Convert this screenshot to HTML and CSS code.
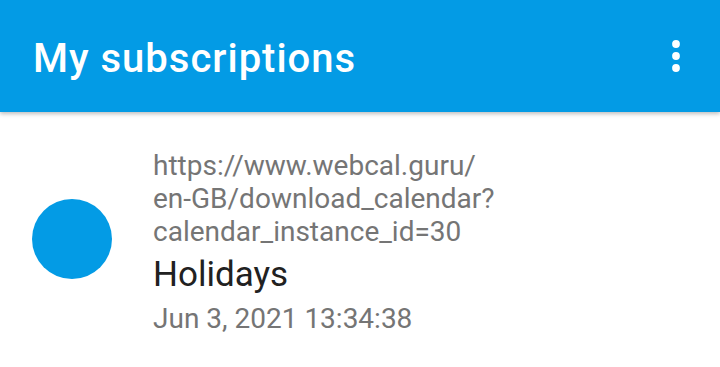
FILE: index.html
```html
<!DOCTYPE html>
<html>
<head>
<meta charset="utf-8">
<link rel="stylesheet" href="styles.css">
</head>
<body>
<header class="toolbar">
  <h1 class="title">My subscriptions</h1>
  <button class="menu" aria-label="More options">
    <svg width="10" height="34" viewBox="0 0 10 34"><circle cx="5" cy="5" r="3.9" fill="#fff"/><circle cx="5" cy="17" r="3.9" fill="#fff"/><circle cx="5" cy="29" r="3.9" fill="#fff"/></svg>
  </button>
</header>
<main class="list">
  <div class="item">
    <div class="avatar"></div>
    <div class="info">
      <div class="url">https://www.webcal.guru/<br>en-GB/download_calendar?<br>calendar_instance_id=30</div>
      <div class="name">Holidays</div>
      <div class="date">Jun 3, 2021 13:34:38</div>
    </div>
  </div>
</main>
</body>
</html>
```
FILE: styles.css
```css
html, body { margin: 0; padding: 0; background: #fff; }
body { width: 720px; height: 367px; overflow: hidden; font-family: Roboto, "Noto Sans", sans-serif; }
.toolbar {
  height: 112px;
  background: #039be5;
  display: flex;
  align-items: center;
  justify-content: space-between;
  padding: 0 0 0 33px;
  box-shadow: 0 2px 4px rgba(0,0,0,0.25);
  position: relative;
  z-index: 1;
}
.title { margin: 5px 0 0; color: #fff; font-size: 40px; font-weight: 500; letter-spacing: 1px; }
.menu { background: none; border: 0; padding: 0; width: 88px; height: 88px; display: flex; align-items: center; justify-content: center; }
.list { padding-top: 37px; }
.item { display: flex; align-items: center; }
.avatar { width: 80px; height: 80px; border-radius: 50%; background: #039be5; margin: 0 41px 7px 32px; flex: none; }
.info { display: flex; flex-direction: column; }
.url { color: #757575; font-size: 28px; line-height: 33px; }
.name { color: #212121; font-size: 35px; line-height: 54px; }
.date { color: #757575; font-size: 28px; line-height: 34px; }
```
